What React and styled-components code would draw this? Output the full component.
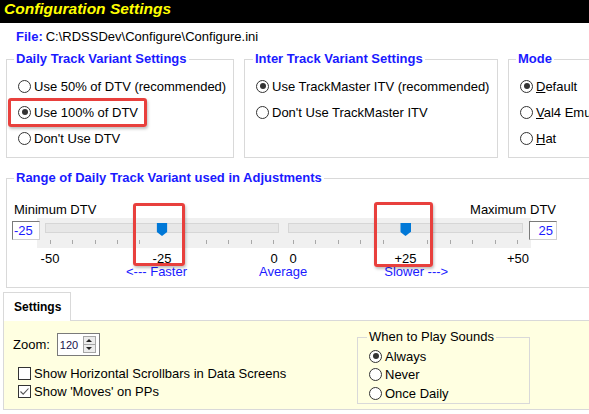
import React from 'react';
import styled, { createGlobalStyle } from 'styled-components';

const GlobalStyle = createGlobalStyle`
  html, body {
    margin: 0;
    padding: 0;
    background: #fff;
  }
  body {
    font-family: 'Liberation Sans', Arial, sans-serif;
    font-size: 13px;
    color: #000;
  }
`;

const Window = styled.div`
  width: 589px;
  height: 414px;
  overflow: hidden;
  background: #fff;
`;

const TitleBar = styled.div`
  height: 23px;
  background: #000;
  color: #ffff00;
  font: italic bold 15.5px 'Liberation Sans', Arial, sans-serif;
  line-height: 18px;
  padding-left: 4px;
  white-space: nowrap;
`;

const FileLine = styled.div`
  padding: 6px 0 0 16px;
  line-height: 16px;
  white-space: nowrap;
`;

const FileLabel = styled.span`
  font-weight: bold;
  color: #1a1aff;
  margin-right: 3px;
`;

const GroupRow = styled.div`
  display: flex;
  gap: 10px;
  padding-left: 6px;
  margin-top: 6px;
`;

const Group = styled.fieldset`
  position: relative;
  flex: none;
  box-sizing: border-box;
  min-width: 0;
  width: ${(p) => p.$w}px;
  height: ${(p) => p.$h}px;
  margin: ${(p) => p.$mt || 0}px 0 0 ${(p) => p.$ml || 0}px;
  padding: 0 0 0 ${(p) => p.$pl ?? 7}px;
  border: 1px solid #d9d9d9;
`;

const Legend = styled.legend`
  padding: 0 2px;
  font-weight: ${(p) => (p.$plain ? 'normal' : 'bold')};
  color: ${(p) => (p.$plain ? '#000' : '#1a1aff')};
  line-height: 16px;
  font-size: 13px;
  white-space: nowrap;
`;

const OptionList = styled.div`
  display: flex;
  flex-direction: column;
  padding: ${(p) => p.$pt}px 0 0 ${(p) => p.$pl}px;
`;

const Option = styled.label`
  position: relative;
  display: flex;
  align-items: center;
  gap: 3px;
  height: ${(p) => p.$h}px;
  white-space: nowrap;
`;

const RadioMark = styled.span`
  position: relative;
  flex: none;
  width: 13px;
  height: 13px;
  box-sizing: border-box;
  border: 1px solid #333;
  border-radius: 50%;
  background: #fff;

  &::after {
    content: '';
    display: ${(p) => (p.$on ? 'block' : 'none')};
    position: absolute;
    inset: 2.5px;
    border-radius: 50%;
    background: #333;
  }
`;

const CheckMark = styled.span`
  flex: none;
  display: flex;
  align-items: center;
  justify-content: center;
  width: 13px;
  height: 13px;
  box-sizing: border-box;
  border: 1px solid #333;
  background: #fff;
`;

const Highlight = styled.span`
  position: absolute;
  left: ${(p) => p.$x}px;
  top: ${(p) => p.$y}px;
  width: ${(p) => p.$w}px;
  height: ${(p) => p.$h}px;
  box-sizing: border-box;
  border: 3px solid #e8403d;
  border-radius: 3px;
  box-shadow: 1px 2px 3px rgba(0, 0, 0, 0.25);
  pointer-events: none;
  z-index: 2;
`;

const LimitsRow = styled.div`
  display: flex;
  justify-content: space-between;
  width: 542px;
  margin-top: 16px;
  line-height: 16px;
`;

const MaxLabel = styled.span`
  background: #fff;
  padding-left: 2px;
`;

const SliderRow = styled.div`
  display: flex;
  align-items: flex-start;
  margin-left: -2px;
`;

const ValueBox = styled.div`
  position: relative;
  z-index: 1;
  flex: none;
  width: 28px;
  height: 19px;
  box-sizing: border-box;
  margin: 3px 0 0 ${(p) => p.$ml || 0}px;
  padding: 0 ${(p) => (p.$right ? 3 : 0)}px 0 ${(p) => (p.$right ? 0 : 1)}px;
  border: 1px solid #d0d0d0;
  border-top-color: #7a7a7a;
  border-left-color: #7a7a7a;
  background: #fff;
  color: #1a1aff;
  line-height: 17px;
  text-align: ${(p) => (p.$right ? 'right' : 'left')};
`;

const SliderColumn = styled.div`
  position: relative;
  flex: none;
  width: ${(p) => p.$w}px;
  margin-left: ${(p) => p.$ml || 0}px;
`;

const TrackArea = styled.div`
  height: 30px;
  box-sizing: border-box;
  padding: 5px ${(p) => p.$pr}px 0 ${(p) => p.$pl}px;
  background: #f0f0f0;
`;

const Track = styled.div`
  position: relative;
  height: 10px;
  box-sizing: border-box;
  border: 1px solid #d6d6d6;
  background: #e7e7e7;
`;

const Thumb = styled.span`
  position: absolute;
  top: -1px;
  width: 11px;
  height: 13px;
  transform: translateX(-50%);
  background: #0078d7;
  clip-path: polygon(0 0, 100% 0, 100% 68%, 50% 100%, 0 68%);
`;

const Ticks = styled.div`
  display: flex;
  justify-content: space-between;
  height: 4px;
  margin: 7px 5px 0;
`;

const Tick = styled.span`
  width: 1px;
  height: 4px;
  background: ${(p) => (p.$hidden ? 'transparent' : '#a8a8a8')};
`;

const ScaleLabels = styled.div`
  display: flex;
  justify-content: space-between;
  margin: 4px ${(p) => p.$pr}px 0 ${(p) => p.$pl}px;
  line-height: 13px;
`;

const ScaleLabel = styled.span`
  display: flex;
  justify-content: center;
  width: 0;
  white-space: nowrap;
`;

const HintRow = styled.div`
  display: flex;
  line-height: 13px;
`;

const Hint = styled.span`
  margin-left: ${(p) => p.$ml}px;
  color: #1a1aff;
  white-space: nowrap;
`;

const Tabs = styled.div`
  margin: 4px 0 0 3px;
`;

const TabHeader = styled.div`
  position: relative;
  z-index: 1;
  width: 68px;
  height: 29px;
  box-sizing: border-box;
  margin-bottom: -1px;
  padding-left: 10px;
  border: 1px solid #d9d9d9;
  border-bottom: none;
  background: #fff;
  font: bold 12px 'Liberation Sans', Arial, sans-serif;
  line-height: 28px;
`;

const TabPanel = styled.div`
  display: flex;
  width: 620px;
  height: 90px;
  box-sizing: border-box;
  border: 1px solid #d9d9d9;
  background: #ffffe1;
`;

const PanelLeft = styled.div`
  flex: none;
  width: 353px;
  padding-left: 9px;
  box-sizing: border-box;
`;

const ZoomRow = styled.div`
  display: flex;
  align-items: center;
  gap: 7px;
  height: 23px;
  margin-top: 12px;
`;

const Spin = styled.div`
  display: flex;
  align-items: center;
  width: 43px;
  height: 23px;
  box-sizing: border-box;
  padding-left: 2px;
  border: 1px solid #7a7a7a;
  background: #fff;
  color: #20104a;
  font-size: 11px;
`;

const SpinButtons = styled.div`
  display: flex;
  flex-direction: column;
  width: 11px;
  height: 15px;
  margin-left: auto;
  margin-right: 3px;
  border: 1px solid #a6a6a6;
  background: #ececec;
`;

const SpinButton = styled.span`
  display: flex;
  align-items: center;
  justify-content: center;
  flex: 1;
  border-top: ${(p) => (p.$down ? '1px solid #a6a6a6' : 'none')};
`;

const Arrow = styled.span`
  width: 0;
  height: 0;
  border-left: 3px solid transparent;
  border-right: 3px solid transparent;
  ${(p) => (p.$down ? 'border-top: 3px solid #222;' : 'border-bottom: 3px solid #222;')}
`;

const Radio = ({ on, children, h = 26 }) => (
  <Option $h={h}>
    <RadioMark $on={on} />
    <span>{children}</span>
  </Option>
);

const Check = ({ on, children }) => (
  <Option $h={18.5}>
    <CheckMark>
      {on && (
        <svg width="11" height="11" viewBox="0 0 11 11">
          <path d="M1.5 5.5 L4.2 8.2 L9.5 2.5" fill="none" stroke="#555" strokeWidth="1.1" />
        </svg>
      )}
    </CheckMark>
    <span>{children}</span>
  </Option>
);

const Slider = ({ min, max, value, width, ml, pl, pr, labels, mark }) => {
  const pct = (value - min) / (max - min);
  const thumbIndex = Math.round(pct * 10);
  return (
    <SliderColumn $w={width} $ml={ml}>
      <TrackArea $pl={pl} $pr={pr}>
        <Track>
          <Thumb style={{ left: `calc(4px + (100% - 8px) * ${pct})` }} />
        </Track>
        <Ticks>
          {Array.from({ length: 11 }, (_, i) => (
            <Tick key={i} $hidden={i === thumbIndex} />
          ))}
        </Ticks>
      </TrackArea>
      <ScaleLabels $pl={pl + 5} $pr={pr + 5}>
        {labels.map((l, i) => (
          <ScaleLabel key={i}>{l}</ScaleLabel>
        ))}
      </ScaleLabels>
      <Highlight $x={mark.x} $y={mark.y} $w={mark.w} $h={mark.h} />
    </SliderColumn>
  );
};

const App = () => (
  <Window>
    <GlobalStyle />
    <TitleBar>Configuration Settings</TitleBar>
    <FileLine>
      <FileLabel>File:</FileLabel>C:\RDSSDev\Configure\Configure.ini
    </FileLine>

    <GroupRow>
      <Group $w={228} $h={107}>
        <Legend>Daily Track Variant Settings</Legend>
        <OptionList $pt={6} $pl={4}>
          <Radio>Use 50% of DTV (recommended)</Radio>
          <Radio on>Use 100% of DTV</Radio>
          <Radio>Don't Use DTV</Radio>
        </OptionList>
        <Highlight $x={1} $y={31} $w={139} $h={29} />
      </Group>
      <Group $w={254} $h={107} $pl={8}>
        <Legend>Inter Track Variant Settings</Legend>
        <OptionList $pt={6} $pl={3}>
          <Radio on>Use TrackMaster ITV (recommended)</Radio>
          <Radio>Don't Use TrackMaster ITV</Radio>
        </OptionList>
      </Group>
      <Group $w={120} $h={107}>
        <Legend>Mode</Legend>
        <OptionList $pt={6} $pl={4}>
          <Radio on><u>D</u>efault</Radio>
          <Radio><u>V</u>al4 Emulation</Radio>
          <Radio><u>H</u>at</Radio>
        </OptionList>
      </Group>
    </GroupRow>

    <Group $w={620} $h={118} $mt={12} $ml={6}>
      <Legend>Range of Daily Track Variant used in Adjustments</Legend>
      <LimitsRow>
        <span>Minimum DTV</span>
        <MaxLabel>Maximum DTV</MaxLabel>
      </LimitsRow>
      <SliderRow>
        <ValueBox>-25</ValueBox>
        <Slider
          min={-50}
          max={0}
          value={-25}
          width={246}
          ml={-3}
          pl={8}
          pr={4}
          labels={['-50', '-25', '0']}
          mark={{ x: 96, y: -15, w: 52, h: 63 }}
        />
        <Slider
          min={0}
          max={50}
          value={25}
          width={248}
          pl={5}
          pr={8}
          labels={['0', '+25', '+50']}
          mark={{ x: 91, y: -16, w: 59, h: 65 }}
        />
        <ValueBox $right $ml={-2}>25</ValueBox>
      </SliderRow>
      <HintRow>
        <Hint $ml={112}>&lt;--- Faster</Hint>
        <Hint $ml={72}>Average</Hint>
        <Hint $ml={77}>Slower ---&gt;</Hint>
      </HintRow>
    </Group>

    <Tabs>
      <TabHeader>Settings</TabHeader>
      <TabPanel>
        <PanelLeft>
          <ZoomRow>
            <span>Zoom:</span>
            <Spin>
              120
              <SpinButtons>
                <SpinButton>
                  <Arrow />
                </SpinButton>
                <SpinButton $down>
                  <Arrow $down />
                </SpinButton>
              </SpinButtons>
            </Spin>
          </ZoomRow>
          <OptionList $pt={8} $pl={5}>
            <Check>Show Horizontal Scrollbars in Data Screens</Check>
            <Check on>Show 'Moves' on PPs</Check>
          </OptionList>
        </PanelLeft>
        <Group $w={173} $h={75} $mt={8} $pl={9}>
          <Legend $plain>When to Play Sounds</Legend>
          <OptionList $pt={2} $pl={2}>
            <Radio on h={18.5}>Always</Radio>
            <Radio h={18.5}>Never</Radio>
            <Radio h={18.5}>Once Daily</Radio>
          </OptionList>
        </Group>
      </TabPanel>
    </Tabs>
  </Window>
);

export default App;
